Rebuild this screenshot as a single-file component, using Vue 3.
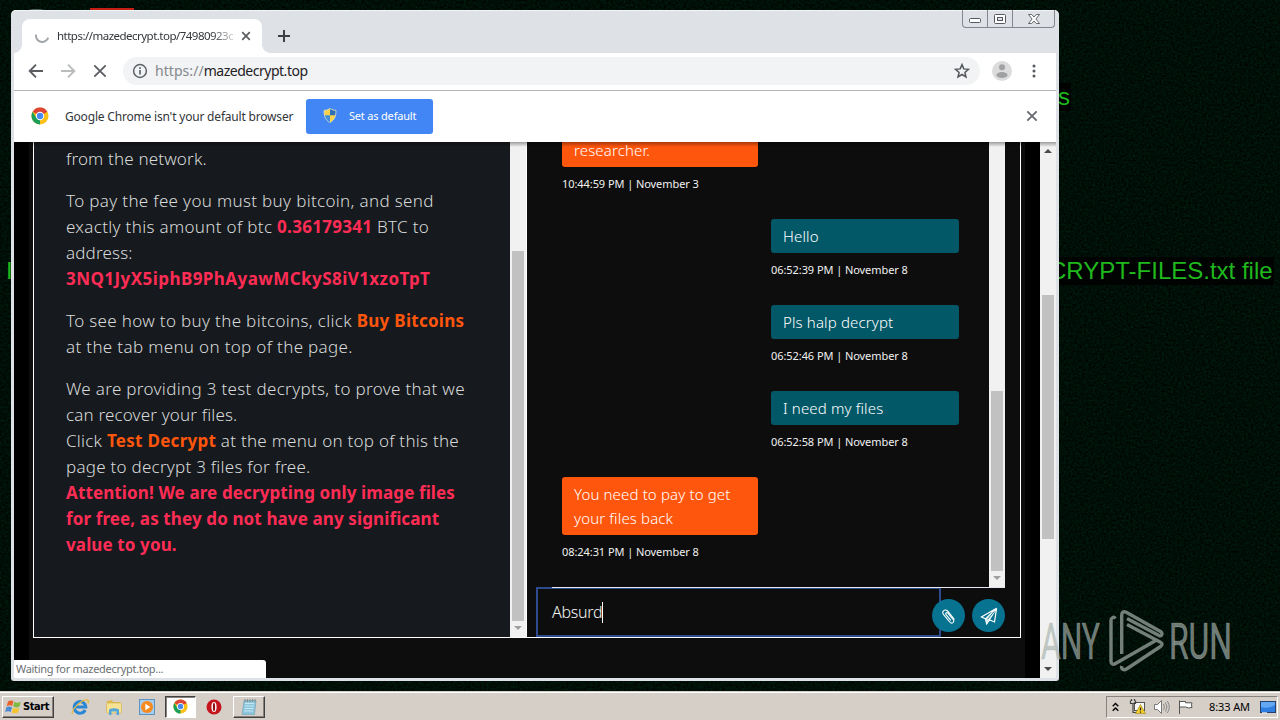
<script setup>
import { ref } from "vue";

const draft = ref("Absurd");

const messages = [
  { side: "in", lines: ["researcher."], time: "10:44:59 PM | November 3" },
  { side: "out", lines: ["Hello"], time: "06:52:39 PM | November 8" },
  { side: "out", lines: ["Pls halp decrypt"], time: "06:52:46 PM | November 8" },
  { side: "out", lines: ["I need my files"], time: "06:52:58 PM | November 8" },
  { side: "in", lines: ["You need to pay to get", "your files back"], time: "08:24:31 PM | November 8" },
];
</script>

<template>
  <div class="desktop">
    <svg class="noise" width="1280" height="720" aria-hidden="true">
      <filter id="grain" x="0" y="0" width="100%" height="100%" color-interpolation-filters="sRGB">
        <feTurbulence type="fractalNoise" baseFrequency="0.45" numOctaves="2" seed="4" />
        <feColorMatrix values="0 0 0 0 0  0 0.17 0 0 -0.025  0 0.07 0 0 -0.005  0 0 0 0 1" />
      </filter>
      <rect width="1280" height="720" filter="url(#grain)" />
    </svg>

    <i class="icon-peek bin"></i>
    <i class="icon-peek red"></i>
    <span class="wallpaper-text top">s</span>
    <span class="wallpaper-text left">I</span>
    <span class="wallpaper-text mid">CRYPT-FILES.txt file</span>

    <section class="window">
      <header class="title-bar">
        <div class="tab">
          <svg class="spinner" width="16" height="16" viewBox="0 0 16 16">
            <path d="M2 6.6a6.3 6.3 0 0 0 12.200 3" fill="none" stroke="#a3a6aa" stroke-width="2" />
          </svg>
          <span class="tab-title">https://mazedecrypt.top/74980923c</span>
          <svg width="10" height="10" viewBox="0 0 10 10">
            <path d="M1.2 1.2l7.6 7.6M8.8 1.2L1.2 8.8" stroke="#5a5d61" stroke-width="1.7" />
          </svg>
        </div>
        <svg class="new-tab" width="14" height="14" viewBox="0 0 14 14">
          <path d="M7 1v12M1 7h12" stroke="#3c4043" stroke-width="2" />
        </svg>
        <div class="caption-buttons">
          <span>
            <svg width="14" height="8" viewBox="0 0 14 8">
              <rect x="1.5" y="3.5" width="11" height="4" rx="1" fill="#fff" stroke="#55585e" />
            </svg>
          </span>
          <span>
            <svg width="14" height="12" viewBox="0 0 14 12">
              <rect x="1.5" y="1.5" width="11" height="9" rx="1" fill="#fff" stroke="#55585e" />
              <rect x="4.5" y="4.5" width="5" height="3" fill="#dee1e6" stroke="#55585e" />
            </svg>
          </span>
          <span>
            <svg width="14" height="12" viewBox="0 0 14 12">
              <path
                d="M1.5 1.5h3.2L7 4l2.3-2.5h3.2L8.9 6l3.6 4.5H9.3L7 8l-2.3 2.5H1.5L5.1 6z"
                fill="#fff"
                stroke="#55585e"
                stroke-width="0.9"
              />
            </svg>
          </span>
        </div>
      </header>

      <div class="toolbar">
        <svg class="back" width="16" height="16" viewBox="0 0 16 16">
          <path d="M15 8H2M8 1.7L1.7 8 8 14.3" fill="none" stroke="#5a5d61" stroke-width="1.9" />
        </svg>
        <svg class="forward" width="16" height="16" viewBox="0 0 16 16">
          <path d="M1 8h13M8 1.7L14.3 8 8 14.3" fill="none" stroke="#babcbe" stroke-width="1.9" />
        </svg>
        <svg class="stop" width="14" height="14" viewBox="0 0 14 14">
          <path d="M1.3 1.3l11.4 11.4M12.7 1.3L1.3 12.7" stroke="#5a5d61" stroke-width="1.8" />
        </svg>
        <div class="omnibox">
          <svg width="16" height="16" viewBox="0 0 16 16">
            <circle cx="8" cy="8" r="6.4" fill="none" stroke="#5f6368" stroke-width="1.5" />
            <path d="M8 7v4.5M8 4.3v1.6" stroke="#5f6368" stroke-width="1.7" />
          </svg>
          <span class="url"><span class="scheme">https://</span>mazedecrypt.top</span>
          <svg class="star" width="16" height="16" viewBox="0 0 16 16">
            <path
              d="M8 1.6l1.8 4.3 4.7.4-3.6 3.1 1.1 4.6L8 11.5 4 14l1.1-4.6-3.6-3.1 4.7-.4z"
              fill="none"
              stroke="#55585d"
              stroke-width="1.5"
            />
          </svg>
        </div>
        <svg class="avatar" width="20" height="20" viewBox="0 0 20 20">
          <circle cx="10" cy="10" r="10" fill="#dcdcdd" />
          <circle cx="10" cy="6.3" r="3" fill="#a0a1a3" />
          <ellipse cx="10" cy="14" rx="5.6" ry="3" fill="#a0a1a3" />
        </svg>
        <svg class="menu" width="4" height="14" viewBox="0 0 4 14">
          <circle cx="2" cy="2" r="1.5" fill="#55585d" />
          <circle cx="2" cy="7" r="1.5" fill="#55585d" />
          <circle cx="2" cy="12" r="1.5" fill="#55585d" />
        </svg>
      </div>

      <div class="info-bar">
        <svg width="18" height="18" viewBox="0 0 18 18">
          <circle cx="9" cy="9" r="8.5" fill="#fbc116" />
          <path d="M9 9L1.6 4.8A8.5 8.5 0 0 1 16.4 4.8z" fill="#dc4437" />
          <path d="M9 9L9 17.5A8.5 8.5 0 0 1 1.6 4.8L5.5 11z" fill="#1b9e57" />
          <circle cx="9" cy="9" r="4.2" fill="#fff" />
          <circle cx="9" cy="9" r="3.2" fill="#4a8af0" />
        </svg>
        <span class="info-text">Google Chrome isn't your default browser</span>
        <button type="button" class="default-button">
          <svg width="14" height="15" viewBox="0 0 14 15">
            <path d="M7 .5C5 1.8 3 2.3 1 2.3 1 8 2.2 12 7 14.5z" fill="#3f8fdd" />
            <path d="M7 .5c2 1.3 4 1.8 6 1.8 0 5.7-1.2 9.7-6 12.2z" fill="#f8d24a" />
            <path d="M1 2.3c2 0 4-.5 6-1.8V7.2H1.3z" fill="#f8d24a" />
            <path d="M7 .5c2 1.3 4 1.8 6 1.8l-.3 4.9H7z" fill="#2f6fb8" />
            <path
              d="M7 .5C5 1.8 3 2.3 1 2.3 1 8 2.2 12 7 14.5c4.8-2.5 6-6.5 6-12.2C11 2.3 9 1.8 7 .5z"
              fill="none"
              stroke="#d9dfc8"
              stroke-width="0.8"
            />
          </svg>
          <span>Set as default</span>
        </button>
        <svg class="info-close" width="12" height="12" viewBox="0 0 12 12">
          <path d="M1.3 1.3l9.4 9.4M10.7 1.3l-9.4 9.4" stroke="#66696d" stroke-width="1.8" />
        </svg>
      </div>

      <div class="viewport">
        <div class="page">
          <main class="panel">
            <article class="instructions">
              <p class="tight">from the network.</p>
              <p>
                To pay the fee you must buy bitcoin, and send<br />
                exactly this amount of btc <b class="pink">0.36179341</b> BTC to<br />
                <span class="tight">address:</span><br />
                <b class="pink wallet">3NQ1JyX5iphB9PhAyawMCkyS8iV1xzoTpT</b>
              </p>
              <p>
                To see how to buy the bitcoins, click <b class="orange">Buy Bitcoins</b><br />
                at the tab menu on top of the page.
              </p>
              <p>
                We are providing 3 test decrypts, to prove that we<br />
                <span class="tight">can recover your files.</span><br />
                <span class="medium">Click <b class="orange">Test Decrypt</b> at the menu on top of this the</span><br />
                <span class="medium">page to decrypt 3 files for free.</span><br />
                <b class="pink attention">
                  Attention! We are decrypting only image files<br />
                  for free, as they do not have any significant<br />
                  value to you.
                </b>
              </p>
            </article>
            <div class="scrollbar left-scroll">
              <i class="thumb"></i>
              <i class="arrow down"></i>
            </div>
            <section class="chat">
              <div class="chat-row">
                <div class="messages">
                  <div v-for="message in messages" :key="message.time" class="message" :class="`is-${message.side}`">
                    <div class="bubble">
                      <div v-for="line in message.lines" :key="line">{{ line }}</div>
                    </div>
                    <time>{{ message.time }}</time>
                  </div>
                </div>
                <div class="scrollbar chat-scroll">
                  <i class="thumb"></i>
                  <i class="arrow down"></i>
                </div>
              </div>
              <div class="composer">
                <div class="draft">{{ draft }}<i class="caret"></i></div>
                <button type="button" class="round attach">
                  <svg width="16" height="16" viewBox="0 0 16 16">
                    <path
                      d="M13.500 11.500L7.200 3.600C5.800 1.900 3.900 1.600 2.700 2.600c-1.200 1-1.200 2.600.1 4.200l6 7.200c1 1.200 2.300 1.300 3.200.6.9-.8 1-2 .1-3.100L7 5.300c-.6-.7-1.400-.8-1.900-.4-.5.500-.5 1.200.1 1.900l4.600 5.500"
                      fill="none"
                      stroke="#fff"
                      stroke-width="1.1"
                    />
                  </svg>
                </button>
                <button type="button" class="round">
                  <svg width="18" height="18" viewBox="0 0 18 18">
                    <path
                      d="M16.600 1.300L1.400 10l4 1.900zM16.600 1.300L14.500 15l-5.100-2.200zM5.400 11.900l1.300 5 2.700-4.100"
                      fill="none"
                      stroke="#fff"
                      stroke-width="1.2"
                    />
                    <path d="M5.400 11.900L16.600 1.300 9.400 12.800l-2.700 4.100z" fill="#e8f5f7" />
                    <path d="M7.500 12.300l6.800-8" stroke="#077390" stroke-width="0.9" />
                  </svg>
                </button>
              </div>
            </section>
          </main>
        </div>
        <div class="scrollbar page-scroll">
          <i class="arrow up"></i>
          <i class="thumb"></i>
          <i class="arrow down"></i>
        </div>
        <div class="status">Waiting for mazedecrypt.top...</div>
      </div>
    </section>

    <svg class="watermark" width="204" height="80" viewBox="0 0 204 80">
      <g
        fill="#a9b3ae"
        fill-opacity="0.68"
        stroke="#a9b3ae"
        stroke-opacity="0.5"
        stroke-width="0.7"
        font-family="Roboto, sans-serif"
        font-size="49.5"
      >
        <text x="5" y="54.5" textLength="59" lengthAdjust="spacingAndGlyphs">ANY</text>
        <text x="133" y="54.5" textLength="63" lengthAdjust="spacingAndGlyphs">RUN</text>
      </g>
      <path
        d="M79.500 14.500c-2-2.500-4.500-.5-4.500 2v41c0 2.500 2 3.500 4.500 2l42-24M85.700 50V11c0-3 2-4 4.500-2.700l34.300 19.200c2.500 1.500 1.500 5.500-1.500 4L91 14.500M91 20.500l33.500 17.700c2 1 2 3 0 4.300L90.500 65c-3 1.700-5.500 0-4.800-3"
        fill="none"
        stroke="#a0aaa5"
        stroke-opacity="0.72"
        stroke-width="3.4"
      />
    </svg>

    <footer class="taskbar">
      <button type="button" class="start">
        <svg width="17" height="16" viewBox="0 0 17 16">
          <path d="M3 2.5c2-1.3 4-1.3 5.5-.2L7.3 7C5.5 6 3.8 6 1.7 7.2z" fill="#e8602c" />
          <path d="M9.5 2.8c2 1.2 4 1.2 6.3 0L14.5 7.5c-2 1.2-4.2 1.2-6.2.1z" fill="#7fb843" />
          <path d="M1.4 8.3c2-1.2 3.8-1.2 5.6-.1L5.7 13C4 11.9 2.3 12 .2 13z" fill="#4b8bd6" />
          <path d="M8 8.7c2 1.1 4 1.2 6.2 0L13 13.5c-2.2 1.2-4.3 1-6.2-.1z" fill="#f5c32c" />
        </svg>
        <span>Start</span>
      </button>
      <div class="launchers">
        <svg width="18" height="18" viewBox="0 0 18 18">
          <path d="M14.2 12A5.8 5.8 0 1 1 14.8 9H5" fill="none" stroke="#2987d6" stroke-width="3" />
          <path d="M1.5 16C-.5 12 11 1 16.5 2c1.200.4 1 2 .3 3.500" fill="none" stroke="#e7b93b" stroke-width="1.3" />
        </svg>
        <svg width="18" height="18" viewBox="0 0 18 18">
          <path d="M2 3l5-1 1 2h7v3H2z" fill="#e0b950" />
          <rect x="1.5" y="5" width="15" height="10" rx="1" fill="#f6e293" stroke="#cfae4d" stroke-width="0.6" />
          <path d="M4 17v-5.500q5-2.500 10 0V17h-2.500v-3.500h-5V17z" fill="#55a6da" />
        </svg>
        <svg width="18" height="18" viewBox="0 0 18 18">
          <rect x="1.5" y="1.5" width="15" height="15" fill="#a8cdec" stroke="#5c93c4" />
          <circle cx="9" cy="9" r="6" fill="#f58a1f" />
          <path d="M7.3 5.800v6.400l5-3.200z" fill="#fff" />
        </svg>
      </div>
      <div class="task pressed">
        <svg width="15" height="15" viewBox="0 0 18 18">
          <circle cx="9" cy="9" r="8.5" fill="#fbc116" />
          <path d="M9 9L1.6 4.8A8.5 8.5 0 0 1 16.4 4.8z" fill="#dc4437" />
          <path d="M9 9L9 17.5A8.5 8.5 0 0 1 1.6 4.8L5.5 11z" fill="#1b9e57" />
          <circle cx="9" cy="9" r="4.2" fill="#fff" />
          <circle cx="9" cy="9" r="3.2" fill="#4a8af0" />
        </svg>
      </div>
      <svg class="opera" width="16" height="16" viewBox="0 0 16 16">
        <circle cx="8" cy="8" r="7.5" fill="#c4151c" />
        <ellipse cx="8" cy="8" rx="2.6" ry="5" fill="#fff" />
        <ellipse cx="8" cy="8" rx="1.1" ry="4.2" fill="#8e1015" />
      </svg>
      <div class="task raised">
        <svg width="18" height="18" viewBox="0 0 18 18">
          <path d="M4 2.5h12l-1.500 14H2z" fill="#8cc6dc" stroke="#6f9fb3" stroke-width="0.6" />
          <path d="M5 5.500h9M5 8h9M4.500 10.500h9M4 13h9" stroke="#c8e8f2" />
          <path d="M5 1v3M7.500 1v3M10 1v3M12.500 1v3M15 1v3" stroke="#848a8d" />
        </svg>
      </div>
      <div class="tray">
        <svg width="7" height="10" viewBox="0 0 7 10">
          <path d="M.7 4.300l2.800-2.800 2.800 2.800M.7 8.800L3.500 6l2.800 2.800" fill="none" stroke="#000" stroke-width="1.4" />
        </svg>
        <svg class="network" width="17" height="16" viewBox="0 0 17 16">
          <rect x="5.5" y="3.5" width="10" height="8" fill="#f7f7f7" stroke="#555" />
          <path d="M1.500 1.500v3h5v-3M4 5v8.500h5M2.500 0v2M5.500 0v2" fill="none" stroke="#444" stroke-width="1.2" />
          <path d="M11.500 5.500l5 9h-10z" fill="#f4d22b" stroke="#9c8212" stroke-width="0.6" />
          <path d="M11.500 8.500v3M11.500 12.500v1.200" stroke="#222" stroke-width="1.2" />
        </svg>
        <svg class="speaker" width="17" height="16" viewBox="0 0 17 16">
          <path d="M1.500 5.500h3l4-4v13l-4-4h-3z" fill="#fff" stroke="#77787a" />
          <path d="M10.500 5q2 3 0 6M12.500 3.500q3 4.500 0 9M14.300 2q4 6 0 12" fill="none" stroke="#88898b" />
        </svg>
        <svg class="flag" width="17" height="16" viewBox="0 0 17 16">
          <path d="M2.500 15V1.500M2.500 2.500h6v1.300h6.500q-1 2 0 4.700-3.500 1.200-6.500-.5h-6" fill="#fff" stroke="#555" />
        </svg>
        <span class="clock">8:33 AM</span>
        <svg width="16" height="14" viewBox="0 0 16 14">
          <rect x="0.5" y="1.5" width="15" height="11" fill="#2f7fe0" stroke="#24406e" />
          <path d="M1 2h14v3Q8 9 1 7z" fill="#63a8f3" />
          <path d="M2 13h5" stroke="#dfe9f5" stroke-width="1.5" />
        </svg>
      </div>
    </footer>
  </div>
</template>

<style>
body {
  margin: 0;
  overflow: hidden;
}
</style>

<style scoped>
.desktop {
  position: relative;
  display: flex;
  flex-direction: column;
  justify-content: flex-end;
  width: 1280px;
  height: 720px;
  overflow: hidden;
  background: #02110b;
  font-family: "Noto Sans", "Open Sans", sans-serif;
}

.desktop svg {
  flex: 0 0 auto;
}

.noise {
  position: absolute;
  inset: 0;
}

.icon-peek {
  position: absolute;
  top: 8px;
  left: 90px;
  width: 44px;
  height: 6px;
  background: #c41d13;
}

.icon-peek.bin {
  top: 9px;
  left: 25px;
  width: 23px;
  border-radius: 50%;
  background: #566a66;
}

.wallpaper-text {
  position: absolute;
  top: 257px;
  left: 1049px;
  height: 28px;
  padding-right: 1px;
  color: #1fb81d;
  background: #010302;
  font-family: "Liberation Sans", Arial, sans-serif;
  font-size: 24px;
  line-height: 28px;
  white-space: nowrap;
}

.wallpaper-text.top {
  top: 83px;
  left: 1058px;
}

.wallpaper-text.left {
  left: 6px;
  background: none;
}

.window {
  position: absolute;
  top: 10px;
  left: 11px;
  display: flex;
  flex-direction: column;
  box-sizing: border-box;
  width: 1048px;
  height: 671px;
  padding: 0 3px 3px;
  border-radius: 5px 5px 3px 3px;
  background: #dee1e6;
  box-shadow: inset 0 1px 0 #f2f4f6;
}

.title-bar {
  display: flex;
  align-items: flex-start;
  height: 43px;
}

.tab {
  position: relative;
  display: flex;
  align-items: center;
  box-sizing: border-box;
  width: 240px;
  height: 34px;
  margin: 9px 0 0 8px;
  padding: 0 11px 0 12px;
  border-radius: 8px 8px 0 0;
  background: #fff;
}

.tab::before,
.tab::after {
  position: absolute;
  bottom: 0;
  left: -8px;
  width: 8px;
  height: 8px;
  background: radial-gradient(circle at 0 0, transparent 7.5px, #fff 8px);
  content: "";
}

.tab::after {
  right: -8px;
  left: auto;
  background: radial-gradient(circle at 100% 0, transparent 7.5px, #fff 8px);
}

.tab-title {
  width: 176px;
  margin: -1px 8px 0 7px;
  overflow: hidden;
  color: #33363a;
  font-size: 11.5px;
  letter-spacing: -0.52px;
  white-space: nowrap;
  mask-image: linear-gradient(to right, #000 155px, transparent 182px);
}

.new-tab {
  margin: 19px 0 0 15px;
}

.caption-buttons {
  display: flex;
  box-sizing: border-box;
  height: 18px;
  margin: 0 1px 0 auto;
  border: 1px solid #83878d;
  border-top: 0;
  border-radius: 0 0 4px 4px;
}

.caption-buttons span {
  display: flex;
  align-items: center;
  justify-content: center;
  width: 24px;
  border-right: 1px solid #83878d;
}

.caption-buttons span:last-child {
  width: 41px;
  border-right: 0;
}

.toolbar {
  display: flex;
  flex: 0 0 37px;
  align-items: center;
  box-sizing: border-box;
  height: 38px;
  flex-basis: 38px;
  padding-bottom: 1px;
  background: #fff;
  border-bottom: 1px solid #b4b5b7;
}

.back {
  margin-left: 14px;
}

.forward {
  margin-left: 16px;
}

.stop {
  margin-left: 17px;
}

.omnibox {
  display: flex;
  align-items: center;
  box-sizing: border-box;
  width: 857px;
  height: 28px;
  margin-left: 16px;
  padding: 0 10px 0 9px;
  border-radius: 14px;
  background: #f1f3f4;
}

.url {
  margin: -1px 0 0 7px;
  color: #1f2124;
  font-size: 14px;
  letter-spacing: -0.48px;
}

.scheme {
  color: #85888c;
  letter-spacing: 0.05px;
}

.star {
  margin-left: auto;
}

.avatar {
  margin-left: 12px;
}

.menu {
  margin-left: 20px;
}

.info-bar {
  display: flex;
  flex: 0 0 51px;
  align-items: center;
  padding-left: 17px;
  background: #fff;
}

.info-bar > svg,
.info-text {
  margin-top: -1px;
}

.info-text {
  width: 229px;
  margin-left: 16px;
  color: #333639;
  font-size: 12px;
  letter-spacing: -0.19px;
  white-space: nowrap;
}

.default-button {
  display: flex;
  gap: 12px;
  align-items: center;
  width: 127px;
  height: 35px;
  margin-left: 12px;
  padding: 0 0 2px 17px;
  border: 0;
  border-radius: 3px;
  color: #fff;
  background: #4285f4;
  font: 11px "Noto Sans", sans-serif;
  letter-spacing: -0.19px;
  white-space: nowrap;
}

.info-bar > .info-close {
  margin: -1px 18px 0 auto;
}

.viewport {
  position: relative;
  display: flex;
  flex: 1;
  min-height: 0;
  background: #000;
}

.viewport::before {
  position: absolute;
  z-index: 2;
  top: 0;
  right: 0;
  left: 0;
  height: 5px;
  background: linear-gradient(rgba(0, 0, 0, 0.35), transparent);
  content: "";
}

.page {
  flex: 0 0 996px;
  margin: 0 15px;
  background: #0d0d0d;
}

.panel {
  display: flex;
  box-sizing: border-box;
  width: 988px;
  height: 496px;
  margin-left: 4px;
  overflow: hidden;
  border: 1px solid #fff;
  border-top: 0;
}

.instructions {
  box-sizing: border-box;
  width: 476px;
  padding: 4px 0 0 32px;
  color: #d8d9da;
  background: #16191d;
  font-size: 17px;
  font-weight: 300;
  line-height: 26px;
  letter-spacing: 0.33px;
  white-space: nowrap;
}

.instructions p {
  margin: 0 0 16px;
}

.instructions b {
  font-weight: 700;
  letter-spacing: 0.28px;
}

.instructions .tight {
  letter-spacing: 0.16px;
}

.instructions .medium {
  letter-spacing: 0.25px;
}

.instructions .wallet {
  letter-spacing: 0.44px;
}

.instructions .attention {
  letter-spacing: 0.12px;
}

.pink {
  color: #ff2c55;
}

.orange {
  color: #ff560d;
}

.scrollbar {
  display: flex;
  flex: 0 0 16px;
  flex-direction: column;
  align-items: center;
  box-sizing: border-box;
  background: #f1f1f1;
}

.thumb {
  flex: 0 0 auto;
  width: 12px;
  background: #c1c1c1;
}

.arrow {
  flex: 0 0 auto;
  width: 0;
  height: 0;
  border: 4px solid transparent;
}

.arrow.down {
  border-top-color: #a0a0a0;
  border-bottom: 0;
}

.arrow.up {
  border-top: 0;
  border-bottom-color: #4a4a4a;
}

.left-scroll {
  flex-basis: 17px;
  padding-top: 109px;
  border-right: 1px solid #fff;
}

.left-scroll .thumb {
  height: 370px;
}

.left-scroll .arrow {
  margin-top: 5px;
}

.chat {
  display: flex;
  flex: 1;
  flex-direction: column;
}

.chat-row {
  display: flex;
  justify-content: flex-end;
  height: 445px;
}

.messages {
  display: flex;
  flex: 0 0 397px;
  flex-direction: column;
  margin-right: 30px;
}

.message {
  display: flex;
  flex-direction: column;
  margin-bottom: 26px;
}

.message.is-out {
  align-self: flex-end;
}

.bubble {
  box-sizing: border-box;
  width: 196px;
  padding: 5px 12px;
  border-radius: 3px;
  color: #fff;
  background: #ff560d;
  font-size: 15px;
  font-weight: 300;
  line-height: 24px;
  letter-spacing: 0.14px;
  white-space: nowrap;
}

.message:first-child .bubble {
  height: 25px;
  padding-top: 0;
  border-radius: 0 0 3px 3px;
  line-height: 17px;
}

.is-out .bubble {
  width: 188px;
  background: #035867;
}

.message time {
  height: 26px;
  color: #f1f1f1;
  font-size: 11px;
  line-height: 34px;
  letter-spacing: -0.07px;
  white-space: nowrap;
}

.chat-scroll {
  justify-content: flex-end;
  margin-right: 15px;
}

.chat-scroll .thumb {
  height: 180px;
}

.chat-scroll .arrow {
  margin: 5px 0 7px;
}

.composer {
  position: relative;
  display: flex;
  flex: 1;
  gap: 7px;
  align-items: flex-start;
  padding-left: 9px;
}

.composer::before {
  position: absolute;
  top: 0;
  right: 15px;
  left: 25px;
  height: 1px;
  background: #e4e8ee;
  content: "";
}

.draft {
  display: flex;
  align-items: center;
  box-sizing: border-box;
  width: 405px;
  height: 50px;
  padding-left: 14px;
  border: 2px solid #2d4a8c;
  color: #f5f5f5;
  font-size: 16px;
  font-weight: 300;
  letter-spacing: -0.25px;
}

.caret {
  width: 1px;
  height: 21px;
  background: #fff;
}

.round {
  display: flex;
  flex: 0 0 33px;
  align-items: center;
  justify-content: center;
  height: 33px;
  margin-top: 12px;
  padding: 0;
  border: 0;
  border-radius: 50%;
  background: #077390;
}

.attach {
  margin-left: -16px;
}

.page-scroll .arrow.up {
  margin-top: 7px;
}

.page-scroll .thumb {
  height: 244px;
  margin-top: 142px;
}

.page-scroll .arrow.down {
  margin-top: auto;
  margin-bottom: 7px;
  border-top-color: #4a4a4a;
}

.status {
  position: absolute;
  bottom: 0;
  left: 0;
  box-sizing: border-box;
  width: 252px;
  height: 18px;
  padding-left: 2px;
  border-radius: 0 3px 0 0;
  color: #6c6f73;
  background: #fff;
  font-size: 11px;
  line-height: 18px;
  letter-spacing: -0.3px;
}

.watermark {
  position: absolute;
  top: 604px;
  left: 1036px;
}

.taskbar {
  position: relative;
  display: flex;
  align-items: center;
  box-sizing: border-box;
  height: 29px;
  padding: 3px 2px 2px;
  border-top: 1px solid #d4d0c8;
  background: #d6cfc8;
  box-shadow: inset 0 1px 0 #fff;
}

.start {
  display: flex;
  gap: 1px;
  align-items: center;
  box-sizing: border-box;
  width: 52px;
  height: 22px;
  padding: 0 0 0 2px;
  border: 1px solid;
  border-color: #fff #404040 #404040 #fff;
  background: #d6cfc8;
  box-shadow: inset -1px -1px 0 #87827c;
  font: 700 11px "DejaVu Sans Condensed", "DejaVu Sans", sans-serif;
  letter-spacing: -0.4px;
}

.launchers {
  display: flex;
  gap: 15.5px;
  margin-left: 17px;
}

.task {
  display: flex;
  align-items: center;
  justify-content: center;
  box-sizing: border-box;
  width: 32px;
  height: 22px;
  border: 1px solid;
  border-color: #fff #404040 #404040 #fff;
}

.task.pressed {
  width: 31px;
  margin-left: 9px;
  border-color: #404040 #fff #fff #404040;
  background: #fff;
  box-shadow: inset 1px 1px 0 #87827c;
}

.task.raised {
  margin-left: 11px;
  box-shadow: inset -1px -1px 0 #87827c;
}

.opera {
  margin-left: 10px;
}

.tray {
  display: flex;
  align-items: center;
  box-sizing: border-box;
  width: 172px;
  height: 22px;
  margin-left: auto;
  padding-left: 5px;
  border: 1px solid;
  border-color: #87827c #fff #fff #87827c;
}

.network {
  margin-left: 10px;
}

.speaker {
  margin-left: 7px;
}

.flag {
  margin-left: 7px;
}

.clock {
  width: 41px;
  margin: 0 10px 0 15px;
  font-size: 11px;
  letter-spacing: -0.1px;
  white-space: nowrap;
}
</style>
